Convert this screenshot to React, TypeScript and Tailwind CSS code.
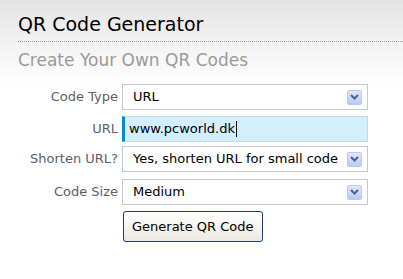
import React from 'react';

const Arrow = () => (
  <span className="flex h-[15px] w-[15px] items-center justify-center rounded-[2px] border border-[#b9c9ef] bg-gradient-to-b from-[#dfe8fd] to-[#b7cbf9]">
    <svg width="9" height="6" viewBox="0 0 9 6">
      <path d="M1 1 L4.5 4.5 L8 1" fill="none" stroke="#4d6185" strokeWidth="2" />
    </svg>
  </span>
);

const SelectBox = ({ value }: { value: string }) => (
  <div className="flex h-[26px] w-[246px] items-center justify-between border border-[#c3cad6] bg-white pl-[10px] pr-[5px] text-[13px] text-black">
    <span>{value}</span>
    <Arrow />
  </div>
);

const Row = ({ label, className, children }: { label: string; className: string; children: React.ReactNode }) => (
  <div className={`flex items-center ${className}`}>
    <div className="w-[122px] pr-[4px] text-right text-[13px] text-[#5b6068]">{label}</div>
    {children}
  </div>
);

export default function App() {
  return (
    <div
      className="h-[279px] w-[403px] bg-gradient-to-b from-[#e4e4e4] via-white via-30% to-white"
      style={{ fontFamily: '"DejaVu Sans", Verdana, sans-serif' }}
    >
      {/* Header */}
      <div className="pl-[18px] pt-[12px]">
        <h1 className="text-[19px] leading-[24px] text-black">QR Code Generator</h1>
        <div className="mt-[5px] border-t border-dotted border-[#999]" />
        <p className="mt-[8px] text-[17px] leading-[20px] text-[#9a9a9a]">Create Your Own QR Codes</p>
      </div>

      {/* Form */}
      <div className="mt-[14px] flex flex-col">
        <Row label="Code Type" className="">
          <SelectBox value="URL" />
        </Row>
        <Row label="URL" className="mt-[6px]">
          <div className="flex h-[26px] w-[246px] items-center border border-[#c3d9e8] border-l-[3px] border-l-[#0a86d0] bg-[#d3eefc] pl-[4px] text-[13px] text-black">
            www.pcworld.dk<span className="ml-[1px] h-[16px] w-px bg-black" />
          </div>
        </Row>
        <Row label="Shorten URL?" className="mt-[4px]">
          <SelectBox value="Yes, shorten URL for small code" />
        </Row>
        <Row label="Code Size" className="mt-[7px]">
          <SelectBox value="Medium" />
        </Row>
        <div className="mt-[6px] pl-[123px]">
          <button className="h-[31px] rounded-[3px] border border-[#1c3d6e] bg-gradient-to-b from-white to-[#ebe9e0] px-[8px] text-[13px] text-black">
            Generate QR Code
          </button>
        </div>
      </div>
    </div>
  );
}
